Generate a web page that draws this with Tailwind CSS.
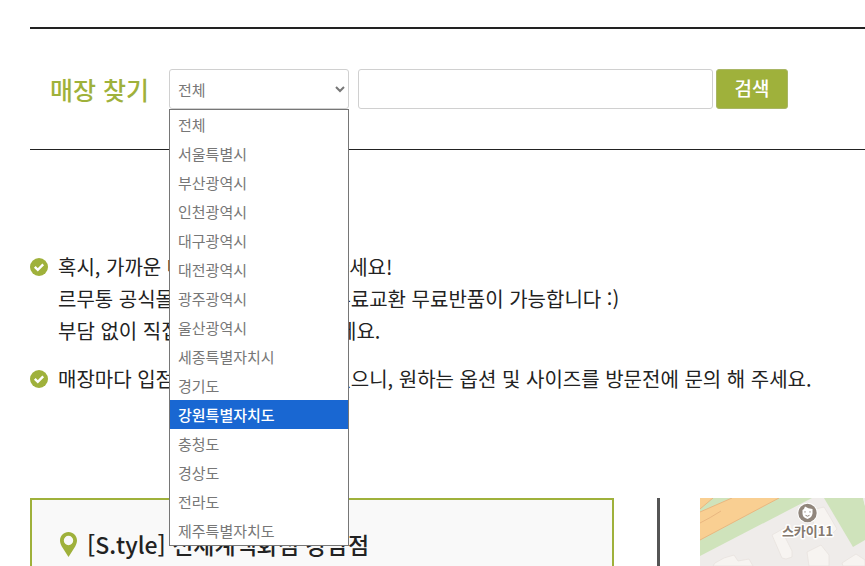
<!DOCTYPE html>
<html lang="ko">
<head>
  <meta charset="UTF-8">
  <meta name="viewport" content="width=device-width, initial-scale=1.0">
  <title>매장 찾기</title>
  <script src="https://cdn.jsdelivr.net/npm/@tailwindcss/browser@4"></script>
</head>
<body class="bg-white text-[#222] font-['Noto_Sans_CJK_KR',sans-serif]">

  <main class="flex min-h-screen flex-col pl-[30px] pt-[27px]">

    <!-- Search bar -->
    <form class="flex items-center border-t-2 border-b border-[#222] py-10 pl-5">
      <label for="region" class="w-[119px] text-[25px] leading-10 font-medium text-[#9fb13b]">매장 찾기</label>

      <div class="relative w-[180px]">
        <select id="region" class="block h-10 w-full rounded-[3px] border border-[#d0d0d0] bg-white pl-1 text-[15px] text-[#777]">
          <option>전체</option>
          <option>서울특별시</option>
          <option>부산광역시</option>
          <option>인천광역시</option>
          <option>대구광역시</option>
          <option>대전광역시</option>
          <option>광주광역시</option>
          <option>울산광역시</option>
          <option>세종특별자치시</option>
          <option>경기도</option>
          <option>강원특별자치도</option>
          <option>충청도</option>
          <option>경상도</option>
          <option>전라도</option>
          <option>제주특별자치도</option>
        </select>

        <!-- Open list -->
        <ul role="listbox" aria-label="지역" class="absolute top-full left-0 z-10 w-full border border-[#767676] bg-white text-[15px] leading-[29px] text-[#777]">
          <li role="option" class="px-2">전체</li>
          <li role="option" class="px-2">서울특별시</li>
          <li role="option" class="px-2">부산광역시</li>
          <li role="option" class="px-2">인천광역시</li>
          <li role="option" class="px-2">대구광역시</li>
          <li role="option" class="px-2">대전광역시</li>
          <li role="option" class="px-2">광주광역시</li>
          <li role="option" class="px-2">울산광역시</li>
          <li role="option" class="px-2">세종특별자치시</li>
          <li role="option" class="px-2">경기도</li>
          <li role="option" aria-selected="true" class="bg-[#1967d2] px-2 font-medium text-white">강원특별자치도</li>
          <li role="option" class="px-2">충청도</li>
          <li role="option" class="px-2">경상도</li>
          <li role="option" class="px-2">전라도</li>
          <li role="option" class="px-2">제주특별자치도</li>
        </ul>
      </div>

      <input type="text" aria-label="매장 검색어" class="ml-[9px] h-10 min-w-0 max-w-[355px] flex-1 rounded-[3px] border border-[#d0d0d0] px-2 text-[15px]">
      <button type="button" class="ml-[3px] h-10 w-[72px] rounded-[3px] border border-[#a9b665] bg-[#9fb13b] pb-[2px] text-[19px] leading-8 font-medium text-white">검색</button>
    </form>

    <!-- Notices -->
    <ul class="mt-[101px] space-y-4 text-xl leading-8">
      <li class="flex gap-[10px]">
        <svg class="mt-[7px] size-[18px] shrink-0" viewBox="0 0 18 18" fill="none">
          <circle cx="9" cy="9" r="9" fill="#9fb13b"/>
          <path d="M4.8 8.8l3 3 5.4-5.4" stroke="#fff" stroke-width="2.4"/>
        </svg>
        <p class="whitespace-nowrap">혹시, 가까운 매장이 없어도 걱정 마세요!<br>르무통 공식몰에서는 구매하셔도 무료교환 무료반품이 가능합니다 :)<br>부담 없이 직접 신어보고 비교해보세요.</p>
      </li>
      <li class="flex gap-[10px]">
        <svg class="mt-[7px] size-[18px] shrink-0" viewBox="0 0 18 18" fill="none">
          <circle cx="9" cy="9" r="9" fill="#9fb13b"/>
          <path d="M4.8 8.8l3 3 5.4-5.4" stroke="#fff" stroke-width="2.4"/>
        </svg>
        <p class="whitespace-nowrap">매장마다 입점제품이 상이할수도 있으니, 원하는 옵션 및 사이즈를 방문전에 문의 해 주세요.</p>
      </li>
    </ul>

    <!-- Store card and map -->
    <section class="mt-[103px] flex flex-1">
      <div class="min-w-0 flex-1 border-2 border-b-0 border-[#9fb13b] bg-[#f9f9f9] px-7 pt-7">
        <h2 class="flex items-center gap-[10px] text-[23px] leading-8 font-medium whitespace-nowrap">
          <svg class="h-[25px] w-[17px] shrink-0" viewBox="0 0 17 25">
            <path fill="#9fb13b" fill-rule="evenodd" d="M8.5 0C3.8 0 0 3.8 0 8.5c0 2.3.8 4 1.800 5.900L8.500 25l6.700-10.600C16.200 12.500 17 10.800 17 8.500 17 3.800 13.200 0 8.500 0zm0 3.800a4.700 4.700 0 1 1 0 9.400 4.700 4.700 0 0 1 0-9.400z"/>
          </svg>
          [S.tyle] 신세계백화점 강남점
        </h2>
      </div>
      <div class="ml-[43px] w-[3px] bg-[#555]"></div>
      <div class="ml-10 w-[165px] overflow-hidden bg-[#efecea]">
        <svg class="block h-[68px] w-[165px]" viewBox="0 0 165 68">
          <rect width="165" height="68" fill="#efecea"/>
          <path d="M0 0H112L0 58z" fill="#cfe3bb"/>
          <path d="M0 14L32 0H79L0 42z" fill="#f9cf92"/>
          <path d="M0 0H13L0 11z" fill="#f9cf92"/>
          <path d="M0 11L13 0M0 14L32 0M0 42L79 0M0 25Q10 20 21 13" fill="none" stroke="#e9b780"/>
          <path d="M124 0H163L165 8V42L153 49z" fill="#cfe3bb"/>
          <path d="M163 0h2v8z" fill="#efecea"/>
          <g fill="#f7f4f1" stroke="#e6e1dc" stroke-width=".7">
            <path d="M72 37l16-9 5 6-8 5 7 14v6l-6 2-4-1z"/>
            <path d="M107 54l14-7 8 10v11h-20z"/>
            <path d="M112 12l12-3 6 10 7 12-7 7-10-4-7-10z"/>
            <path d="M13 68l2-3 9-5 10-3 4 6 11-2 4 7z"/>
            <path d="M142 65l14-9 9 6v6h-22z"/>
          </g>
          <circle cx="107.500" cy="15" r="10.200" fill="#fff"/>
          <circle cx="107.500" cy="15" r="9.200" fill="#91867c"/>
          <path d="M102.500 12q2-1 2.500-3.500 3 2 7.500 2.500v4.500q-.5 4-5 5.500-5-1.500-5-5.500z" fill="#fff"/>
          <path d="M105 13.200v1.400M110 13.200v1.400M105.500 17.300q2 1.800 4 0" fill="none" stroke="#91867c"/>
          <text x="107.500" y="38" text-anchor="middle" font-size="13" font-weight="700" fill="#85796f" stroke="#fff" stroke-width="3" stroke-linejoin="round" paint-order="stroke">스카이11</text>
        </svg>
      </div>
    </section>
  </main>

</body>
</html>
